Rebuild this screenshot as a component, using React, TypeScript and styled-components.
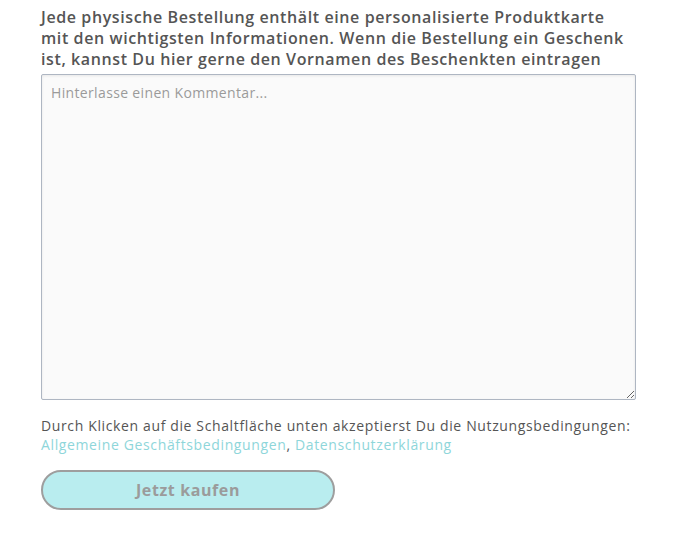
import React from "react";
import styled, { createGlobalStyle } from "styled-components";

const GlobalStyle = createGlobalStyle`
  body {
    margin: 0;
    background: #fff;
    font-family: "Open Sans", "DejaVu Sans", sans-serif;
  }
`;

const Page = styled.main`
  padding: 7px 38px 0 41px;
  display: flex;
  flex-direction: column;
`;

const Label = styled.label`
  display: block;
  font-size: 16px;
  font-weight: 600;
  line-height: 21px;
  color: #555;
  letter-spacing: 0.6px;
  margin-bottom: 4px;
`;

const Comment = styled.textarea`
  box-sizing: border-box;
  width: 595px;
  height: 326px;
  padding: 8px 9px;
  border: 1px solid #aeb6c2;
  border-radius: 2px;
  background: #fafafa;
  box-shadow: inset 0 1px 3px rgba(0, 0, 0, 0.08);
  font-family: inherit;
  font-size: 14px;
  letter-spacing: 0.35px;
  color: #444;
  resize: both;

  &::placeholder {
    color: #9a9a9a;
  }
`;

const Terms = styled.p`
  margin: 16px 0 0;
  font-size: 14px;
  line-height: 19px;
  letter-spacing: 0.63px;
  color: #555;
`;

const TermsLink = styled.a`
  color: #8ed6da;
  text-decoration: none;
`;

const BuyButton = styled.button`
  margin-top: 16px;
  width: 294px;
  height: 40px;
  border: 2px solid #9e9e9e;
  border-radius: 20px;
  background: #b9edef;
  color: #9b9b9b;
  font-family: inherit;
  font-size: 16px;
  font-weight: 700;
  letter-spacing: 0.6px;
  cursor: not-allowed;
`;

export default function App() {
  return (
    <>
      <GlobalStyle />
      <Page>
        <Label htmlFor="comment">
          Jede physische Bestellung enthält eine personalisierte Produktkarte
          mit den wichtigsten Informationen. Wenn die Bestellung ein Geschenk
          ist, kannst Du hier gerne den Vornamen des Beschenkten eintragen
        </Label>
        <Comment id="comment" placeholder="Hinterlasse einen Kommentar..." />
        <Terms>
          Durch Klicken auf die Schaltfläche unten akzeptierst Du die
          Nutzungsbedingungen:
          <br />
          <TermsLink href="#">Allgemeine Geschäftsbedingungen</TermsLink>,{" "}
          <TermsLink href="#">Datenschutzerklärung</TermsLink>
        </Terms>
        <div>
          <BuyButton disabled>Jetzt kaufen</BuyButton>
        </div>
      </Page>
    </>
  );
}
